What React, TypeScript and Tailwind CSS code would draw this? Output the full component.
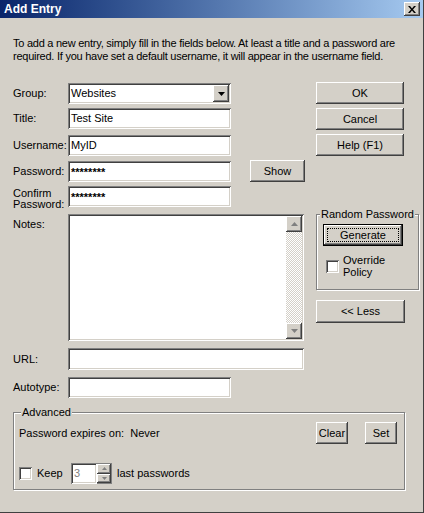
const raised =
  "bg-[#d4d0c8] shadow-[inset_-1px_-1px_#404040,inset_1px_1px_#fff,inset_-2px_-2px_#808080,inset_2px_2px_#d4d0c8]";
const sunken =
  "bg-white shadow-[inset_1px_1px_#808080,inset_-1px_-1px_#fff,inset_2px_2px_#404040,inset_-2px_-2px_#d4d0c8]";
const etched = "border border-[#808080] shadow-[inset_1px_1px_#fff,1px_1px_#fff]";

function Btn({ children, className = "" }: { children: React.ReactNode; className?: string }) {
  return <div className={`${raised} flex items-center justify-center ${className}`}>{children}</div>;
}

function Field({ children, className = "" }: { children?: React.ReactNode; className?: string }) {
  return <div className={`${sunken} h-[21px] flex items-center pl-[3px] ${className}`}>{children}</div>;
}

function Check() {
  return <div className={`${sunken} w-[13px] h-[13px] shrink-0`} />;
}

function Tri({ down = true, color = "#000", w = 7, h = 4 }: { down?: boolean; color?: string; w?: number; h?: number }) {
  return (
    <svg width={w} height={h} viewBox={`0 0 ${w} ${h}`}>
      <polygon points={down ? `0,0 ${w},0 ${w / 2},${h}` : `0,${h} ${w},${h} ${w / 2},0`} fill={color} />
    </svg>
  );
}

function ScrollArrow({ down }: { down?: boolean }) {
  return (
    <div className={`${raised} w-[16px] h-[16px] flex items-center justify-center`}>
      <Tri down={down} color="#808080" />
    </div>
  );
}

export default function App() {
  return (
    <div className="w-[424px] h-[513px] bg-[#d4d0c8] font-['Liberation_Sans',Arial,sans-serif] text-[11px] text-black flex flex-col border-r border-b border-[#404040] overflow-hidden">
      {/* title bar */}
      <div className="h-[18px] shrink-0 bg-linear-to-r from-[#0a246a] to-[#a6caf0] flex items-center justify-between pl-[4px] pr-[3px]">
        <span className="text-white font-bold text-[12px] leading-none">Add Entry</span>
        <div className={`${raised} w-[16px] h-[14px] flex items-center justify-center`}>
          <svg width="8" height="7" viewBox="0 0 8 7">
            <path d="M0 0h2l2 2.5 2-2.5h2L5 3.5 8 7H6L4 4.5 2 7H0l3-3.5z" fill="#000" />
          </svg>
        </div>
      </div>

      <p className="px-[13px] pt-[19px] leading-[13px] whitespace-nowrap tracking-[-0.25px]">
        To add a new entry, simply fill in the fields below. At least a title and a password are
        <br />
        required. If you have set a default username, it will appear in the username field.
      </p>

      <div className="flex px-[13px]">
        {/* left column */}
        <div className="w-[292px] flex flex-col">
          <div className="flex items-center mt-[20px] h-[21px]">
            <span className="w-[55px]">Group:</span>
            <Field className="w-[163px] justify-between pr-[2px]">
              <span>Websites</span>
              <div className={`${raised} w-[16px] h-[17px] flex items-center justify-center`}>
                <Tri />
              </div>
            </Field>
          </div>
          <div className="flex items-center mt-[4px] h-[21px]">
            <span className="w-[55px]">Title:</span>
            <Field className="w-[163px]">Test Site</Field>
          </div>
          <div className="flex items-center mt-[6px] h-[21px]">
            <span className="w-[55px]">Username:</span>
            <Field className="w-[163px]">MyID</Field>
          </div>
          <div className="flex items-center mt-[4px] h-[22px]">
            <span className="w-[55px]">Password:</span>
            <Field className="w-[163px] items-start pt-[3px] font-bold">********</Field>
            <Btn className="w-[55px] h-[22px] ml-[19px]">Show</Btn>
          </div>
          <div className="flex items-start mt-[4px] h-[21px]">
            <span className="w-[55px] leading-[11px] pt-[2px]">
              Confirm
              <br />
              Password:
            </span>
            <Field className="w-[163px] items-start pt-[3px] font-bold">********</Field>
          </div>
          <div className="flex items-start mt-[7px]">
            <span className="w-[55px] pt-[2px]">Notes:</span>
            <div className={`${sunken} w-[236px] h-[127px] flex justify-end p-[2px]`}>
              <div className="w-[16px] flex flex-col bg-[repeating-conic-gradient(#d4d0c8_0_25%,#fff_0_50%)] bg-size-[2px_2px]">
                <ScrollArrow down={false} />
                <div className="flex-1" />
                <ScrollArrow down />
              </div>
            </div>
          </div>
          <div className="flex items-center mt-[7px] h-[22px]">
            <span className="w-[55px]">URL:</span>
            <Field className="w-[236px] h-[22px]" />
          </div>
          <div className="flex items-center mt-[7px] h-[21px]">
            <span className="w-[55px]">Autotype:</span>
            <Field className="w-[163px]" />
          </div>
        </div>

        {/* right column */}
        <div className="w-[101px] ml-[11px] flex flex-col">
          <Btn className="w-[88px] h-[22px] mt-[19px]">OK</Btn>
          <Btn className="w-[88px] h-[22px] mt-[4px]">Cancel</Btn>
          <Btn className="w-[88px] h-[22px] mt-[4px]">Help (F1)</Btn>
          <fieldset className={`${etched} mt-[52px] h-[82px] px-[3px]`}>
            <legend className="px-[1px] leading-[13px] whitespace-nowrap bg-[#d4d0c8]">Random Password</legend>
            <div className="border border-black mt-[3px] ml-[3px] w-[80px] h-[22px]">
              <Btn className="w-full h-full outline outline-dotted outline-black -outline-offset-4">Generate</Btn>
            </div>
            <div className="flex items-center mt-[8px] ml-[6px] gap-[4px]">
              <Check />
              <span className="leading-[12px]">
                Override
                <br />
                Policy
              </span>
            </div>
          </fieldset>
          <Btn className="w-[89px] h-[23px] mt-[10px]">&lt;&lt; Less</Btn>
        </div>
      </div>

      {/* advanced group */}
      <fieldset className={`${etched} mx-[13px] w-[392px] mt-[8px] h-[84px] px-[5px]`}>
        <legend className="px-[1px] ml-[2px] leading-[13px] bg-[#d4d0c8]">Advanced</legend>
        <div className="flex items-center mt-[3px] h-[22px]">
          <span className="flex-1">Password expires on:&nbsp; Never</span>
          <Btn className="w-[32px] h-[22px]">Clear</Btn>
          <Btn className="w-[32px] h-[22px] ml-[17px] mr-[2px]">Set</Btn>
        </div>
        <div className="flex items-center mt-[19px] h-[21px]">
          <Check />
          <span className="ml-[5px] w-[34px]">Keep</span>
          <div className={`${sunken} bg-[#d4d0c8] w-[26px] h-[21px] flex items-center pl-[3px] text-[#808080]`}>3</div>
          <div className="w-[15px] h-[21px] flex flex-col border-y border-r border-[#808080]">
            <div className={`${raised} flex-1 flex items-center justify-center`}>
              <Tri down={false} color="#808080" w={5} h={3} />
            </div>
            <div className={`${raised} flex-1 flex items-center justify-center`}>
              <Tri color="#808080" w={5} h={3} />
            </div>
          </div>
          <span className="ml-[5px]">last passwords</span>
        </div>
      </fieldset>
    </div>
  );
}
